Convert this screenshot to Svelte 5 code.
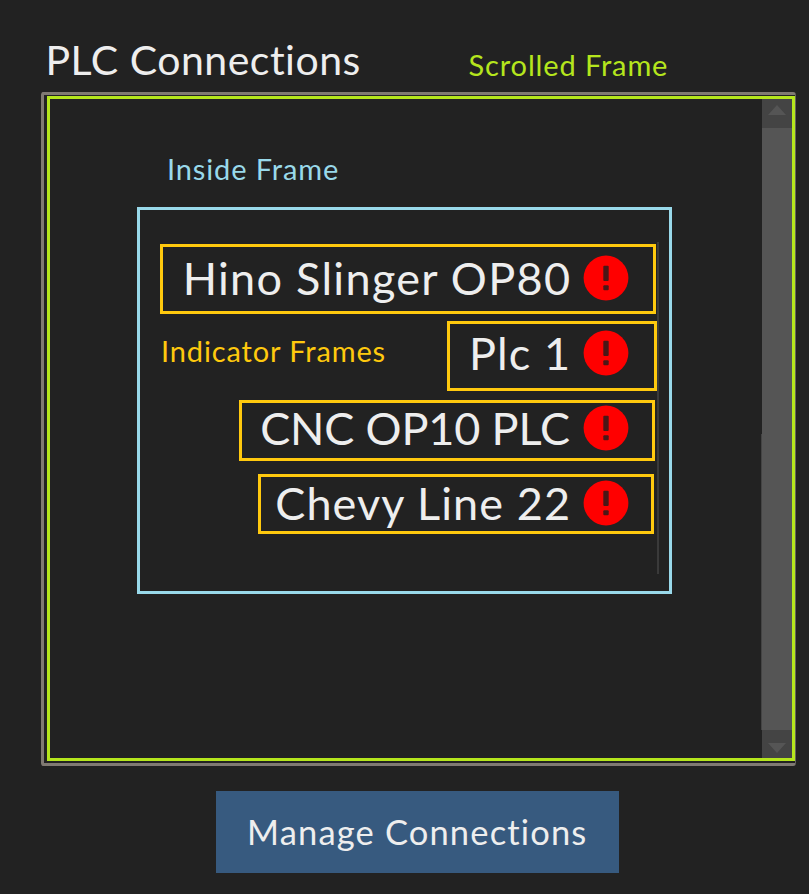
<script>
  const connections = [
    { name: 'Hino Slinger OP80', w: 496, h: 70, gap: 7, shift: 16, pad: 25.5, ls: 1.3, top: -1.5 },
    { name: 'Plc 1', w: 210, h: 70, gap: 9, shift: 15, pad: 26.5, ls: 1.1, top: -3 },
    { name: 'CNC OP10 PLC', w: 416, h: 61, gap: 13, shift: 17, pad: 24.5, ls: -0.15, top: -2.5 },
    { name: 'Chevy Line 22', w: 396, h: 60, gap: 0, shift: 18, pad: 23.5, ls: 1.08, top: -1.5 }
  ];
</script>

<main>
  <header>
    <h1>PLC Connections</h1>
    <span class="note lime">Scrolled Frame</span>
  </header>

  <section class="panel">
    <div class="scrolled">
      <div class="content">
        <span class="note sky">Inside Frame</span>
        <div class="inside">
          <div class="rule"></div>
          {#each connections as c}
            <div
              class="indicator"
              style="width:{c.w}px;height:{c.h}px;margin-bottom:{c.gap}px;margin-right:{c.shift - 3}px;padding-right:{c.pad - 1}px;padding-bottom:{-2 * c.top}px"
            >
              <span class="name" style="letter-spacing:{c.ls}px;margin-right:{-c.ls}px">{c.name}</span>
              <svg width="46" height="46" viewBox="0 0 46 46">
                <circle cx="23" cy="23" r="22.4" fill="#f00" />
                <rect x="20.3" y="10.8" width="5.4" height="15.2" rx="1" fill="#4a1717" />
                <rect x="20.3" y="30.2" width="5.4" height="5" rx="1" fill="#4a1717" />
              </svg>
            </div>
          {/each}
          <span class="note amber">Indicator Frames</span>
        </div>
      </div>
      <div class="scrollbar">
        <div class="arrow"><svg width="18" height="10" viewBox="0 0 18 10"><path d="M0 10L9 0l9 10z" fill="#555" /></svg></div>
        <div class="thumb"></div>
        <div class="arrow down"><svg width="18" height="10" viewBox="0 0 18 10"><path d="M0 0h18L9 10z" fill="#555" /></svg></div>
      </div>
    </div>
  </section>

  <button>Manage Connections</button>
</main>

<style>
  :global(body) {
    margin: 0;
    background: #fff;
  }
  main {
    box-sizing: border-box;
    width: 809px;
    height: 894px;
    background: #222;
    color: #eee;
    font-family: Lato, 'Liberation Sans', sans-serif;
    font-variant-ligatures: none;
    display: flex;
    flex-direction: column;
    overflow: hidden;
  }
  header {
    display: flex;
    height: 92px;
    padding-left: 45.5px;
    box-sizing: border-box;
    flex: none;
  }
  h1 {
    margin: 35px 0 0;
    width: 423px;
    font-size: 41px;
    font-weight: 400;
    line-height: 50px;
    letter-spacing: 0.5px;
    white-space: nowrap;
  }
  .note {
    font-size: 29px;
    line-height: 34px;
    letter-spacing: 0.87px;
    white-space: nowrap;
  }
  .lime {
    color: #b5e61d;
    margin-top: 48px;
  }
  .panel {
    box-sizing: border-box;
    width: 755px;
    height: 674px;
    margin-left: 41px;
    padding: 1px 0 0 3px;
    border: 3px solid #807a73;
    border-right: 1px solid #66625c;
    border-radius: 3px;
    flex: none;
  }
  .scrolled {
    box-sizing: border-box;
    width: 748px;
    height: 665px;
    border: 3px solid #b5e61d;
    display: flex;
  }
  .content {
    width: 712px;
    flex: none;
  }
  .sky {
    display: block;
    color: #99d9ea;
    margin: 53px 0 0 117px;
  }
  .inside {
    box-sizing: border-box;
    position: relative;
    width: 535px;
    height: 387px;
    margin: 21px 0 0 87px;
    border: 3px solid #99d9ea;
    padding-top: 34px;
    display: flex;
    flex-direction: column;
    align-items: flex-end;
  }
  .indicator {
    box-sizing: border-box;
    border: 3px solid #ffc90e;
    display: flex;
    align-items: center;
    justify-content: flex-end;
    gap: 12.5px;
    flex: none;
    position: relative;
  }
  .indicator svg {
    flex: none;
  }
  .name {
    font-size: 45px;
    line-height: 54px;
    white-space: nowrap;
  }
  .amber {
    position: absolute;
    left: 21px;
    top: 124px;
    color: #ffc90e;
  }
  .rule {
    position: absolute;
    right: 10px;
    top: 32px;
    width: 2px;
    height: 332px;
    background: #3a3a3a;
  }
  .scrollbar {
    flex: 1;
    display: flex;
    flex-direction: column;
    background: #555;
  }
  .arrow {
    box-sizing: border-box;
    height: 29px;
    padding-bottom: 8px;
    background: #444;
    display: flex;
    align-items: center;
    justify-content: center;
  }
  .down {
    height: 28px;
    padding: 8px 0 0;
  }
  .thumb {
    flex: 1;
    background: #555;
    position: relative;
  }
  .thumb::before {
    content: '';
    position: absolute;
    left: -1px;
    top: 306px;
    bottom: 0;
    width: 1px;
    background: #444;
  }
  button {
    width: 402.5px;
    height: 82px;
    margin: 24.5px 0 0 216px;
    padding: 0;
    border: 0;
    background: #375a7f;
    color: #eee;
    font: 34.5px/42px Lato, 'Liberation Sans', sans-serif;
    letter-spacing: 1.15px;
    white-space: nowrap;
    flex: none;
  }
</style>
